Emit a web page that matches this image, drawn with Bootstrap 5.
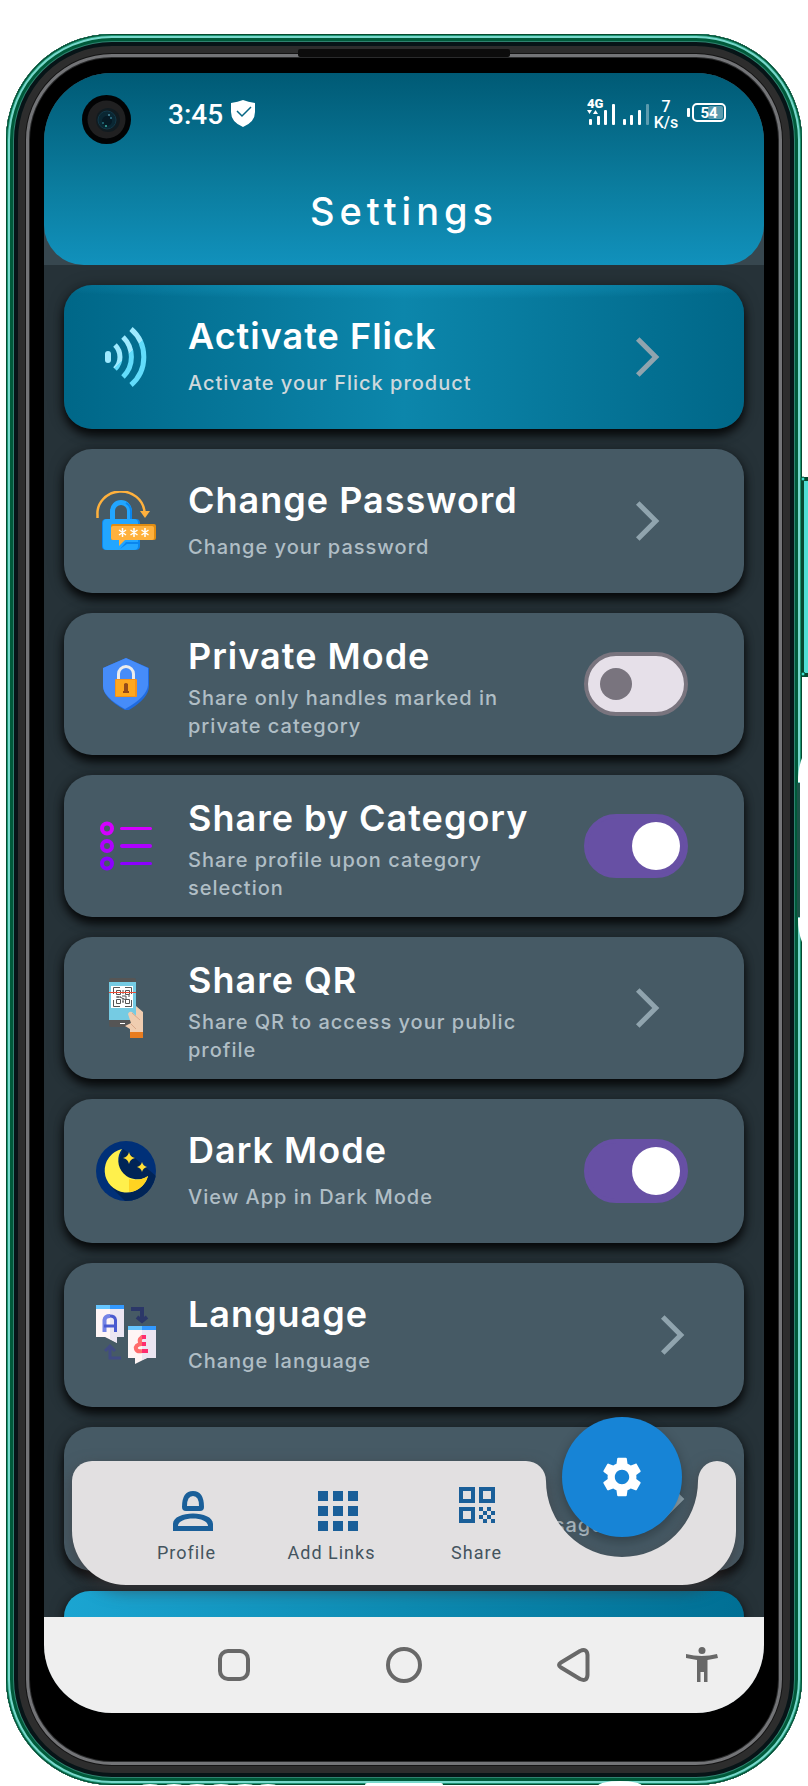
<!DOCTYPE html>
<html lang="en">
<head>
<meta charset="utf-8">
<meta name="viewport" content="width=device-width, initial-scale=1">
<title>Settings</title>
<link href="https://cdn.jsdelivr.net/npm/bootstrap@5.3.0/dist/css/bootstrap.min.css" rel="stylesheet">
<style>
  body { background: #fff; font-family: Inter, "Open Sans", sans-serif; }
  .stage { padding: 34px 6px 1px; }

  /* phone shell: the metal and glass rings are stacked inset shadows */
  .phone {
    padding: 39px 38px 72px;
    border-radius: 106px;
    background: #000;
    box-shadow:
      inset 0 0 0 1px #06492f, inset 0 0 0 2px #1c9372, inset 0 0 0 4px #78d8cc,
      inset 0 0 0 7px #005a3a, inset 0 0 0 8px #2f8270, inset 0 0 0 12px #071417,
      inset 0 0 0 19px #2d2d2d, inset 0 0 0 20px #141414, inset 0 0 0 23px #737477,
      inset 0 0 0 24px #2a2b2c;
  }
  .speaker { top: 15px; width: 212px; height: 8px; background: #0c0c0c; border-radius: 2px; }
  .side-keys { top: 442px; right: -6px; }
  .foot-cuts { bottom: 0; left: 128px; }
  .screen { border-radius: 68px; background: #263238; }

  .top-wrap { background: #37474f; }
  .topbar { background: linear-gradient(#005a75, #0b7d9f 60%, #1191bc); border-radius: 0 0 40px 40px; height: 192px; }
  .lens { top: 22px; left: 38px; width: 49px; height: 49px; }
  .status { height: 80px; padding: 0 38px 0 124px; font-family: Roboto, sans-serif; }
  .clock { font-size: 28px; font-weight: 500; line-height: 32px; padding-top: 3px; }
  .rate { font-size: 16px; line-height: 16px; font-weight: 500; width: 26px; }
  .page-title { font-size: 38px; line-height: 60px; letter-spacing: 5px; font-weight: 500; padding-top: 28px; }

  .items { padding: 20px 20px 0; gap: 20px; }
  .item {
    min-height: 144px; padding: 0 56px 0 32px; gap: 32px;
    border-radius: 28px; background: #465a65; color: #fff; text-decoration: none;
    box-shadow: 0 6px 10px rgba(0,0,0,.8), 0 2px 16px rgba(0,0,0,.35);
  }
  .item.tall { min-height: 142px; }
  .item.go { padding-right: 73px; }
  .item.go-end { padding-right: 48px; }
  .item.glow { background: radial-gradient(ellipse 60% 14px at 50% 0, rgba(24,155,195,.6), rgba(24,155,195,0)), linear-gradient(90deg, #006788, #0c86ab 50%, #006788); }
  .item.peek { min-height: 26px; border-radius: 28px 28px 0 0; background: linear-gradient(100deg, #1ba5d2, #0d8bb2 50%, #006f94); }
  .pic { width: 60px; height: 60px; flex: none; }
  .arrow { width: 48px; height: 48px; flex: none; fill: #90a4ae; }
  .copy { max-width: 364px; flex: 1 1 0; gap: 9px; padding-bottom: 5px; }
  .tall .copy { gap: 4px; padding: 4px 0 0; }
  .name { font-size: 36px; line-height: 48px; font-weight: 600; letter-spacing: 1px; white-space: nowrap; }
  .hint { font-size: 20px; line-height: 28px; font-weight: 500; letter-spacing: 1px; color: #b0bec5; }
  .glow .hint { color: #cfd8dc; }
  .under { padding-bottom: 32px; padding-right: 12px; }

  .toggle {
    appearance: none; width: 104px; height: 64px; margin: 0; flex: none;
    display: flex; align-items: center; border-radius: 32px;
    border: 4px solid #79747e; background: #e6e0e9; padding: 0 12px;
  }
  .toggle::before { content: ""; width: 32px; height: 32px; border-radius: 50%; background: #79747e; }
  .toggle:checked { background: #6750a4; border-color: #6750a4; justify-content: flex-end; padding: 0 4px; }
  .toggle:checked::before { width: 48px; height: 48px; background: #fff; }

  .dock { left: 28px; right: 28px; bottom: 32px; height: 124px; filter: drop-shadow(0 6px 8px rgba(60,50,50,.55)); }
  .dock-fill { background: #e2e0e1; border-radius: 20px 0 0 54px; margin-right: -1px; }
  .tabs { left: 28px; right: 28px; bottom: 32px; height: 124px; padding: 0 42px; }
  .tab { flex: 1 1 0; border: 0; background: none; padding: 22px 0 0; color: #44545e; font: 400 18px/24px Roboto, sans-serif; letter-spacing: 1px; white-space: nowrap; }
  .tab svg { height: 58px; padding-bottom: 10px; fill: #1a5f99; }
  .fab { width: 120px; height: 120px; margin-top: -44px; border: 0; border-radius: 50%; background: #1784d6; box-shadow: 0 4px 12px rgba(0,0,0,.3); }
  .fab svg { height: 48px; padding: 0; fill: #fff; }

  .sysnav { height: 96px; background: #efefef; padding-left: 105px; }
  .sysnav button { flex: 170 1 0; border: 0; background: none; padding: 0; }
  .sysnav .last { flex-grow: 86; margin-right: 19px; }
  .sysnav svg { fill: none; stroke: #686868; stroke-width: 4; }
</style>
</head>
<body>
<div class="stage">
<div class="phone position-relative">
  <div class="speaker position-absolute start-50 translate-middle-x"></div>
  <svg class="side-keys position-absolute" width="12" height="472" viewBox="0 0 12 472" aria-hidden="true">
    <rect x="5" y="1" width="7" height="200" fill="#06492f"/><rect x="8" y="5" width="4" height="192" fill="#4fdfd4"/>
    <circle cx="7" cy="3" r="2" fill="#3fe0d0" stroke="#06492f"/><circle cx="7" cy="198" r="2" fill="#3fe0d0" stroke="#06492f"/>
    <path d="M6 282Q2 292 2 306H4V442H2Q2 456 6 466H12V282Z" fill="#fff"/>
    <rect x="1" y="307" width="3" height="134" fill="#1d5448"/>
  </svg>
  <svg class="foot-cuts position-absolute" width="520" height="5" viewBox="0 0 520 5" fill="#fff" aria-hidden="true">
    <ellipse cx="16" cy="6" rx="9" ry="2"/><ellipse cx="40" cy="6" rx="9" ry="2"/><ellipse cx="63" cy="6" rx="9" ry="2"/><ellipse cx="87" cy="6" rx="9" ry="2"/><ellipse cx="111" cy="6" rx="9" ry="2"/><ellipse cx="134" cy="6" rx="9" ry="2"/>
    <rect x="231" y="3" width="78" height="4" rx="2"/><ellipse cx="486" cy="6" rx="22" ry="5"/>
  </svg>

  <div class="screen overflow-hidden">
    <div class="top-wrap">
      <header class="topbar position-relative text-white">
        <svg class="lens position-absolute" viewBox="0 0 49 49" aria-hidden="true">
          <circle cx="24.500" cy="24.500" r="24.500" fill="#020304"/><circle cx="24.500" cy="24.500" r="19" fill="#202021"/>
          <circle cx="26" cy="25" r="12" fill="#111b20"/><circle cx="25" cy="25" r="9" fill="#0a2733" stroke="#123848"/>
          <circle cx="25" cy="26" r="5" fill="#061a25"/><circle cx="27" cy="20" r="1" fill="#4c8ba0"/><circle cx="24" cy="31" r="1" fill="#3db5a7"/><circle cx="21" cy="28" r="1" fill="#24707f"/><circle cx="29" cy="23" r="1" fill="#357a91"/>
        </svg>
        <div class="status d-flex align-items-center">
          <span class="clock">3:45</span>
          <svg class="ms-2" width="24" height="27" viewBox="0 0 24 27" aria-label="Protected">
            <path d="M12 0Q17 2 24 3V12Q24 22 12 27Q0 22 0 12V3Q7 2 12 0Z" fill="#fff"/><path d="M6 11l5 5 9-9" fill="none" stroke="#056684" stroke-width="1.500"/>
          </svg>
          <svg class="ms-auto" width="62" height="30" viewBox="0 0 62 30" fill="#fff" aria-label="Signal">
            <text x="0" y="10" font-family="Roboto, sans-serif" font-size="13" font-weight="900">4G</text>
            <path d="M0 12h5l-2.500 4zM6 16l2.500-4 2.500 4z"/>
            <rect x="2" y="21" width="3" height="6" rx="1"/><rect x="10" y="18" width="3" height="9" rx="1"/><rect x="17" y="12" width="3" height="15" rx="1"/><rect x="25" y="6" width="3" height="21" rx="1"/>
            <rect x="36" y="21" width="3" height="6" rx="1"/><rect x="43" y="17" width="3" height="10" rx="1"/><rect x="51" y="12" width="3" height="15" rx="1"/><rect x="59" y="6" width="3" height="21" rx="1" opacity=".35"/>
          </svg>
          <span class="rate text-center ms-1 pt-1">7<br>K/s</span>
          <svg class="ms-2" width="39" height="20" viewBox="0 0 39 20" aria-label="Battery">
            <rect x="0" y="5" width="3" height="9" rx="1" fill="#fff"/><rect x="6" y="1" width="32" height="17" rx="4" fill="none" stroke="#fff" stroke-width="2"/>
            <rect x="21" y="3" width="15" height="13" rx="2" fill="#fff" opacity=".35"/>
            <text x="22" y="15" text-anchor="middle" font-family="Roboto, sans-serif" font-size="15" font-weight="700" fill="#fff">54</text>
          </svg>
        </div>
        <h1 class="page-title text-center m-0">Settings</h1>
      </header>
    </div>

    <main class="position-relative overflow-hidden">
      <div class="items d-flex flex-column">
        <a class="item glow go d-flex align-items-center" href="#activate">
          <svg class="pic" viewBox="0 0 60 60" fill="none" aria-hidden="true">
            <defs><linearGradient id="wave" gradientUnits="userSpaceOnUse" x1="10" y1="10" x2="50" y2="50"><stop offset=".5" stop-color="#9eeaff"/><stop offset=".5" stop-color="#62dcfb"/></linearGradient></defs>
            <rect x="9" y="24" width="6" height="12" rx="3" fill="#9eeaff"/>
            <path d="M19 18A17 17 0 0 1 19 42M27 10A28 28 0 0 1 27 50M35 2A37 37 0 0 1 35 58" stroke="url(#wave)" stroke-width="5"/>
          </svg>
          <span class="copy d-flex flex-column"><span class="name">Activate Flick</span><span class="hint">Activate your Flick product</span></span>
          <svg class="arrow ms-auto" viewBox="0 0 24 24" aria-hidden="true"><path d="M6.490 20.130l1.770 1.770 9.900-9.900-9.900-9.900-1.770 1.770L14.620 12z"/></svg>
        </a>

        <a class="item go d-flex align-items-center" href="#password">
          <svg class="pic" viewBox="0 0 60 60" aria-hidden="true">
            <path d="M1.500 27V24A23.500 22 0 0 1 48.500 21" fill="none" stroke="#ffb13d" stroke-width="2.500"/><path d="M44 20h10l-5 7z" fill="#ffb13d"/>
            <path d="M16.500 30V20a8.500 8.500 0 0 1 17 0V30" fill="none" stroke="#22a6ff" stroke-width="5"/><path d="M35 29V20a10 10 0 0 0-5-8" fill="none" stroke="#0a86ee" stroke-width="2"/>
            <rect x="6" y="28" width="38" height="31" rx="4" fill="#0a86ee"/><rect x="7" y="28" width="35" height="31" rx="4" fill="#22a6ff"/>
            <path d="M24 58l6-7h14v2H31z" fill="#0a86ee"/>
            <rect x="15" y="33" width="45" height="16" rx="2" fill="#e08c12"/><rect x="15" y="35" width="43" height="14" rx="2" fill="#ffb13d"/><path d="M23 48v7l7-7z" fill="#ffb13d"/>
            <path d="M26.500 37v9M23 39l7 5M30 39l-7 5M38 37v9M34.500 39l7 5M41.500 39l-7 5M49 37v9M45.500 39l7 5M52.500 39l-7 5" stroke="#fff" stroke-width="1.500"/>
          </svg>
          <span class="copy d-flex flex-column"><span class="name">Change Password</span><span class="hint">Change your password</span></span>
          <svg class="arrow ms-auto" viewBox="0 0 24 24" aria-hidden="true"><path d="M6.490 20.130l1.770 1.770 9.900-9.900-9.900-9.900-1.770 1.770L14.620 12z"/></svg>
        </a>

        <label class="item tall d-flex align-items-center" for="private">
          <svg class="pic" viewBox="0 0 60 60" aria-hidden="true">
            <path d="M30 4L53 14V32Q53 44 33 56H29Q7 44 7 32V14Z" fill="#1f6be0"/><path d="M30 4L52 14V31Q51 43 29 55Q7 43 7 32V14Z" fill="#468cf9"/>
            <path d="M22.500 26V20a7.500 7.500 0 0 1 15 0V26" fill="none" stroke="#ececec" stroke-width="3"/>
            <rect x="19" y="25" width="22" height="18" rx="1" fill="#f5921a"/><rect x="20" y="26" width="19" height="16" fill="#ffa81f"/>
            <path d="M28 30Q30 28 32 30V37h1v2h-6v-2h1z" fill="#964a18"/>
          </svg>
          <span class="copy d-flex flex-column"><span class="name">Private Mode</span><span class="hint">Share only handles marked in private category</span></span>
          <input class="toggle ms-auto" type="checkbox" role="switch" id="private">
        </label>

        <label class="item tall d-flex align-items-center" for="category">
          <svg class="pic" viewBox="0 0 60 60" fill="none" stroke-linecap="round" aria-hidden="true">
            <g stroke="#d400ff"><circle cx="11" cy="12.500" r="5" stroke-width="4"/><path d="M25.500 12.500h29" stroke-width="3"/></g>
            <g stroke="#b000ff"><circle cx="11" cy="30" r="5" stroke-width="4"/><path d="M26 30h28" stroke-width="4"/></g>
            <g stroke="#8c00ff"><circle cx="11" cy="47.500" r="5" stroke-width="4"/><path d="M25.500 47.500h29" stroke-width="3"/></g>
          </svg>
          <span class="copy d-flex flex-column"><span class="name">Share by Category</span><span class="hint">Share profile upon category selection</span></span>
          <input class="toggle ms-auto" type="checkbox" role="switch" id="category" checked>
        </label>

        <a class="item tall go d-flex align-items-center" href="#qr">
          <svg class="pic" viewBox="0 0 60 60" aria-hidden="true">
            <rect x="13" y="0" width="27" height="49" rx="2" fill="#555"/><rect x="13" y="4" width="27" height="38" fill="#75cbe3"/>
            <rect x="15" y="8" width="22" height="22" fill="#fff"/>
            <path d="M24 9.500H17.500V16M29 9.500H35.500V16M17.500 22V28.500H24M35.500 22V28.500H29M20.500 12.500h4v4h-4zM29.500 12.500h4v4h-4zM20.500 21.500h4v4h-4zM29.500 21.500h4v4h-4zM20 19h5M27 12v4M26 18h4v4M32 18h2M26 24h2M22 18v2M27 20v4M24 19l6 3" fill="none" stroke="#555" stroke-width="1"/>
            <path d="M13 14.500h27" stroke="#f04a32"/><path d="M24 45.500h5" stroke="#fff"/>
            <path d="M40 28l7 6V55H34V51L29 48L35 45L32 36Q33 33 36 34L40 38z" fill="#f0cdb0"/><path d="M36 35l8 7M35 46l5 5" stroke="#dba98a" fill="none"/>
            <rect x="34" y="54" width="13" height="6" fill="#e87c1f"/>
          </svg>
          <span class="copy d-flex flex-column"><span class="name">Share QR</span><span class="hint">Share QR to access your public profile</span></span>
          <svg class="arrow ms-auto" viewBox="0 0 24 24" aria-hidden="true"><path d="M6.490 20.130l1.770 1.770 9.900-9.900-9.900-9.900-1.770 1.770L14.620 12z"/></svg>
        </a>

        <label class="item d-flex align-items-center" for="dark">
          <svg class="pic" viewBox="0 0 60 60" aria-hidden="true">
            <defs><clipPath id="disc"><circle cx="30" cy="30" r="30"/></clipPath></defs>
            <g clip-path="url(#disc)"><rect width="60" height="60" fill="#003078"/><path d="M27 8L33 12L60 35V60H29L14 45Z" fill="#002457"/></g>
            <path d="M26 8A22 22 0 1 0 52 35A19 19 0 0 1 26 8Z" fill="#fff04c"/><path d="M33 38Q43 41 52 35A22 22 0 0 1 33 51Z" fill="#ffd321"/>
            <path d="M33 11Q34 16 39 17Q34 18 33 23Q32 18 27 17Q32 16 33 11ZM46 21Q47 25 51 26Q47 27 46 31Q45 27 41 26Q45 25 46 21Z" fill="#ffdf38"/>
          </svg>
          <span class="copy d-flex flex-column"><span class="name">Dark Mode</span><span class="hint">View App in Dark Mode</span></span>
          <input class="toggle ms-auto" type="checkbox" role="switch" id="dark" checked>
        </label>

        <a class="item go-end d-flex align-items-center" href="#language">
          <svg class="pic" viewBox="0 0 60 60" aria-hidden="true">
            <path d="M0 4H28V32H21V38L9 32H0Z" fill="#fff5f5"/><path d="M14 4H28V32H21V38L14 34Z" fill="#ece6f2"/><path d="M0 0H14V4H0Z" fill="#66c6ff"/><path d="M14 0H28V4H14Z" fill="#3399ff"/>
            <path d="M32 24H60V53H51L39 59V53H32Z" fill="#fff5f5"/><path d="M46 24H60V53H51L46 55Z" fill="#ece6f2"/><path d="M32 21H46V25H32Z" fill="#66c6ff"/><path d="M46 21H60V25H46Z" fill="#3399ff"/>
            <path d="M8.500 27V15Q9 11 14 11" fill="none" stroke="#7584e6" stroke-width="4"/><path d="M14 11Q19 11 19.500 15V27M8 21H20" fill="none" stroke="#4a5ad0" stroke-width="3"/>
            <path d="M49 32H46Q42 35 45 39Q39 40 40 44Q41 47 46 46" fill="none" stroke="#ff6c6c" stroke-width="4"/><path d="M46 32h4M46 39h4M46 46h6" stroke="#ff2d70" stroke-width="4"/>
            <path d="M35 4H46V15M41 12l5 4 5-4" fill="none" stroke="#2b3768" stroke-width="4"/><path d="M25 53H14V42M9 46l5-5 5 5" fill="none" stroke="#414b83" stroke-width="3"/>
          </svg>
          <span class="copy d-flex flex-column"><span class="name">Language</span><span class="hint">Change language</span></span>
          <svg class="arrow ms-auto" viewBox="0 0 24 24" aria-hidden="true"><path d="M6.490 20.130l1.770 1.770 9.900-9.900-9.900-9.900-1.770 1.770L14.620 12z"/></svg>
        </a>

        <a class="item go-end d-flex align-items-center justify-content-end" href="#message">
          <span class="hint under align-self-end">message</span>
          <svg class="arrow" viewBox="0 0 24 24" aria-hidden="true"><path d="M6.490 20.130l1.770 1.770 9.900-9.900-9.900-9.900-1.770 1.770L14.620 12z"/></svg>
        </a>

        <div class="item peek"></div>
      </div>

      <div class="dock position-absolute d-flex" aria-hidden="true">
        <div class="dock-fill flex-grow-1"></div>
        <svg class="flex-shrink-0" width="211" height="124" viewBox="453 0 211 124"><path d="M453 0H454A20 20 0 0 1 474 20A76 76 0 0 0 626 20A19 20 0 0 1 645 0A19 19 0 0 1 664 20V70A54 54 0 0 1 610 124H453Z" fill="#e2e0e1"/></svg>
      </div>
      <nav class="tabs position-absolute d-flex">
        <button class="tab d-flex flex-column align-items-center" type="button">
          <svg width="52" viewBox="-12 -8 52 48"><path fill-rule="evenodd" d="M9 16Q9 0 20 0T31 16Q31 20 27 20H13Q9 20 9 16ZM14 15H26Q26 5 20 5T14 15ZM0 40V33C0 19 40 19 40 33V40ZM5 35H35C35 25 5 25 5 35Z"/></svg>
          Profile
        </button>
        <button class="tab d-flex flex-column align-items-center" type="button">
          <svg width="52" viewBox="-12 -8 52 48"><path d="M0 0h10v10H0zM15 0h10v10H15zM30 0h10v10H30zM0 15h10v10H0zM15 15h10v10H15zM30 15h10v10H30zM0 30h10v10H0zM15 30h10v10H15zM30 30h10v10H30z"/></svg>
          Add Links
        </button>
        <button class="tab d-flex flex-column align-items-center" type="button">
          <svg width="36" viewBox="0 -4 36 48"><path fill-rule="evenodd" d="M0 0h16v16H0zM4 4v8h8V4zM20 0h16v16H20zM24 4v8h8V4zM0 20h16v16H0zM4 24v8h8v-8z"/><path d="M20 20h4v4h-4zM28 20h4v4h-4zM24 24h4v4h-4zM32 24h4v4h-4zM20 28h4v4h-4zM28 28h4v4h-4zM24 32h4v4h-4zM32 32h4v4h-4z"/></svg>
          Share
        </button>
        <div class="tab pt-0 d-flex justify-content-center">
          <button class="fab flex-shrink-0 p-0 d-flex align-items-center justify-content-center" type="button" aria-label="Settings">
            <svg width="48" viewBox="0 0 24 24"><path d="M19.140 12.940c.04-.3.06-.61.06-.94 0-.32-.02-.64-.07-.94l2.030-1.580c.18-.14.23-.41.12-.61l-1.920-3.320c-.12-.22-.37-.29-.59-.22l-2.390.96c-.5-.38-1.030-.7-1.620-.94l-.36-2.540c-.04-.24-.24-.41-.48-.41h-3.840c-.24 0-.43.17-.47.41l-.36 2.540c-.59.24-1.130.57-1.620.94l-2.390-.96c-.22-.08-.47 0-.59.22L2.740 8.870c-.12.21-.08.47.12.61l2.030 1.580c-.05.3-.09.63-.09.94s.02.64.07.94l-2.030 1.580c-.18.14-.23.41-.12.61l1.920 3.320c.12.22.37.29.59.22l2.390-.96c.5.38 1.030.7 1.620.94l.36 2.540c.05.24.24.41.48.41h3.840c.24 0 .44-.17.47-.41l.36-2.540c.59-.24 1.130-.56 1.620-.94l2.390.96c.22.08.47 0 .59-.22l1.920-3.320c.12-.22.07-.47-.12-.61l-2.010-1.580zM12 15.600c-1.980 0-3.600-1.620-3.600-3.600s1.620-3.600 3.600-3.600 3.600 1.620 3.600 3.600-1.620 3.600-3.600 3.600z"/></svg>
          </button>
        </div>
      </nav>
    </main>

    <footer class="sysnav d-flex align-items-stretch">
      <button type="button" aria-label="Recent apps"><svg width="36" height="36" viewBox="0 0 36 36"><rect x="4" y="4" width="28" height="28" rx="8"/></svg></button>
      <button type="button" aria-label="Home"><svg width="36" height="36" viewBox="0 0 36 36"><circle cx="18" cy="18" r="16"/></svg></button>
      <button type="button" aria-label="Back"><svg width="36" height="36" viewBox="0 0 36 36" stroke-linejoin="round"><path d="M5 15.500L24 4Q31 1 31.500 8V28Q31 35 24 32L5 20.500Q1 18 5 15.500Z"/></svg></button>
      <button class="last" type="button" aria-label="Accessibility"><svg width="32" height="36" viewBox="0 0 32 36"><path stroke="none" fill="#686868" d="M0 7Q16 11 31 7L32 11L21.500 13V35H18V25H14.500V35H11V13L0 11Z"/><circle cx="16" cy="3.500" r="3.500" stroke="none" fill="#686868"/></svg></button>
    </footer>
  </div>
</div>
</div>
<script src="https://cdn.jsdelivr.net/npm/bootstrap@5.3.0/dist/js/bootstrap.bundle.min.js"></script>
</body>
</html>
